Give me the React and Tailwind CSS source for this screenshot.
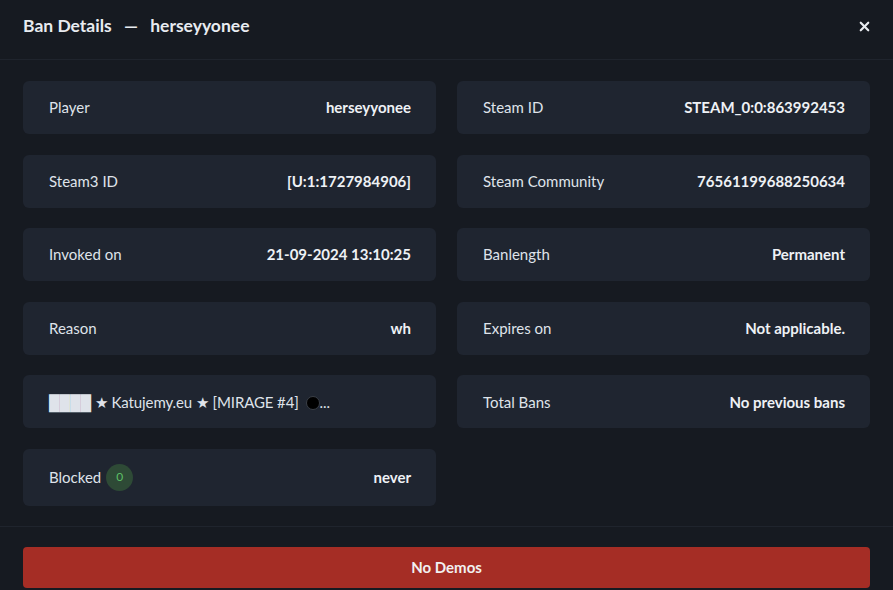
import { X } from 'lucide-react';

const rows = [
  [{ label: 'Player', value: 'herseyyonee' }, { label: 'Steam ID', value: 'STEAM_0:0:863992453' }],
  [{ label: 'Steam3 ID', value: '[U:1:1727984906]' }, { label: 'Steam Community', value: '76561199688250634' }],
  [{ label: 'Invoked on', value: '21-09-2024 13:10:25' }, { label: 'Banlength', value: 'Permanent' }],
  [{ label: 'Reason', value: 'wh' }, { label: 'Expires on', value: 'Not applicable.' }],
];

function Card({ children, tall }) {
  return (
    <div className={`flex items-center justify-between rounded-[6px] bg-[#1f2530] pl-[26px] pr-[25px] ${tall ? 'h-[57px]' : 'h-[53px]'}`}>
      {children}
    </div>
  );
}

function Field({ label, value }) {
  return (
    <Card>
      <span className="text-[#dfe3ea]">{label}</span>
      <span className="font-bold text-[#eef1f5]">{value}</span>
    </Card>
  );
}

export default function App() {
  return (
    <div className="w-[893px] h-[590px] overflow-hidden bg-[#161a21] text-[15px] font-['Lato','Noto_Sans',sans-serif]">
      {/* Header */}
      <div className="h-[60px] flex items-center justify-between pl-[23px] pr-[21px] pb-[6px] border-b border-[#1f242d]">
        <h2 className="text-[17.5px] font-bold text-[#e8ebf0]">
          Ban Details <span className="mx-[8px]">—</span> herseyyonee
        </h2>
        <X size={15} strokeWidth={3.5} className="text-[#e8ebf0]" />
      </div>

      {/* Body */}
      <div className="grid grid-cols-2 gap-x-[21px] gap-y-[20.6px] px-[23px] pt-[21px] pb-[20px] border-b border-[#1f242d]">
        {rows.map((r, i) => (
          <div key={i} className="contents">
            <Field {...r[0]} />
            <Field {...r[1]} />
          </div>
        ))}
        <Card>
          <span className="text-[#dfe3ea] whitespace-nowrap tracking-[-0.1px]">
            ████ ★ Katujemy.eu ★ [MIRAGE #4]{' '}
            <span className="inline-block w-[14px] h-[14px] ml-[3px] rounded-full bg-black align-[-2px] border border-[#3a3f47]" />...
          </span>
        </Card>
        <Field label="Total Bans" value="No previous bans" />
        <Card tall>
          <span className="flex items-center gap-[5px] text-[#dfe3ea]">
            Blocked
            <span className="w-[27px] h-[27px] rounded-full bg-[#2e4a36] text-[#5cbf66] text-[12px] flex items-center justify-center">0</span>
          </span>
          <span className="font-bold text-[#eef1f5]">never</span>
        </Card>
      </div>

      {/* Footer */}
      <div className="px-[23px] pt-[20px]">
        <button className="w-full h-[41px] rounded-[4px] bg-[#a52d25] text-[#f1f1f1] font-bold text-[15px]">
          No Demos
        </button>
      </div>
    </div>
  );
}
